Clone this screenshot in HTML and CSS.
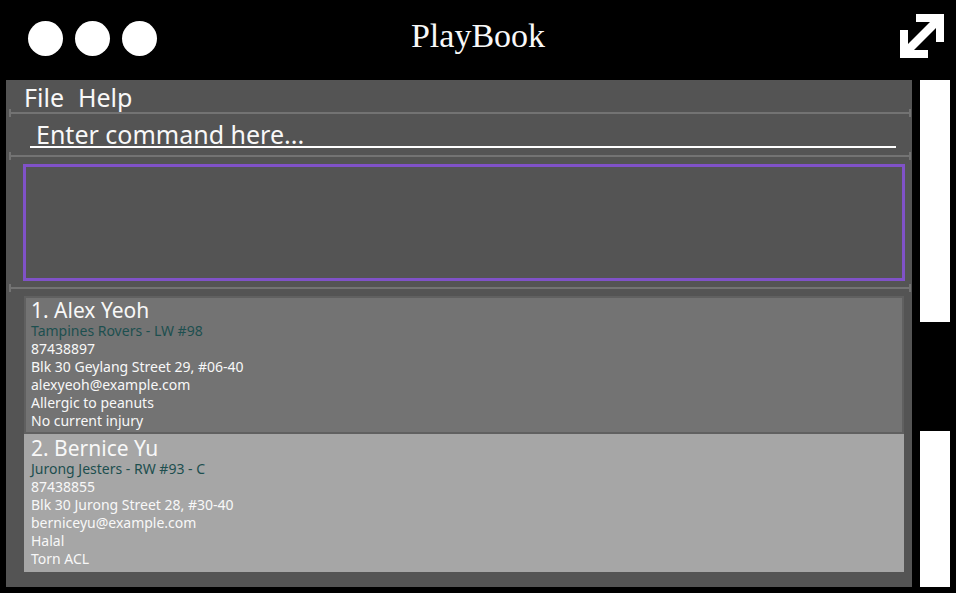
FILE: index.html
```html
<!DOCTYPE html>
<html lang="en">
<head>
<meta charset="utf-8">
<title>PlayBook</title>
<link rel="stylesheet" href="styles.css">
</head>
<body>
<header class="titlebar">
  <div class="dots"><span class="dot"></span><span class="dot"></span><span class="dot"></span></div>
  <h1 class="title">PlayBook</h1>
  <button class="expand" type="button" aria-label="Expand window">
    <svg viewBox="0 0 46 46" width="46" height="46" aria-hidden="true">
      <path fill="#fff" d="M17 1H45V29H37V15L15 37H29V45H1V17H9V31L31 9H17Z"/>
    </svg>
  </button>
</header>
<div class="body">
  <main class="panel">
    <nav class="menu">
      <button type="button">File</button>
      <button type="button">Help</button>
    </nav>
    <div class="divider"></div>
    <form class="command">
      <input type="text" aria-label="Command" placeholder="Enter command here...">
    </form>
    <div class="divider"></div>
    <output class="result" aria-label="Result"></output>
    <div class="divider"></div>
    <section class="people" aria-label="Players">
      <article class="card">
        <h2>1. Alex Yeoh</h2>
        <p class="team">Tampines Rovers - LW #98</p>
        <p>87438897</p>
        <p>Blk 30 Geylang Street 29, #06-40</p>
        <p>alexyeoh@example.com</p>
        <p>Allergic to peanuts</p>
        <p>No current injury</p>
      </article>
      <article class="card light">
        <h2>2. Bernice Yu</h2>
        <p class="team">Jurong Jesters - RW #93 - C</p>
        <p>87438855</p>
        <p>Blk 30 Jurong Street 28, #30-40</p>
        <p>berniceyu@example.com</p>
        <p>Halal</p>
        <p>Torn ACL</p>
      </article>
    </section>
  </main>
  <div class="scrollbar">
    <div class="track upper"></div>
    <div class="thumb"></div>
    <div class="track lower"></div>
  </div>
</div>
</body>
</html>
```
FILE: styles.css
```css
* {
  box-sizing: border-box;
}

body {
  display: flex;
  flex-direction: column;
  min-height: 100vh;
  margin: 0;
  background: #000;
  color: #f8f8f8;
  font-family: "Noto Sans", "Open Sans", sans-serif;
}

h1, h2, p {
  margin: 0;
  font-weight: 400;
}

button {
  padding: 0;
  border: 0;
  background: none;
  color: inherit;
  font: inherit;
}

.titlebar {
  display: grid;
  grid-template-columns: 1fr auto 1fr;
  align-items: center;
  height: 80px;
  padding: 0 11px 8px;
}

.dots {
  display: flex;
  gap: 12px;
  padding: 5px 0 0 17px;
}

.dot {
  width: 35px;
  height: 35px;
  border-radius: 50%;
  background: #fff;
}

.title {
  font-family: "Liberation Serif", serif;
  font-size: 34px;
  line-height: 40px;
}

.expand {
  justify-self: end;
  height: 46px;
}

.expand svg {
  display: block;
}

.body {
  display: flex;
  flex: 1;
  gap: 8px;
  padding: 0 6px 6px;
}

.panel {
  flex: 1;
  background: #545454;
}

.menu {
  display: flex;
  gap: 14px;
  height: 32px;
  padding-left: 18px;
  font-size: 25px;
  line-height: 34px;
}

.divider {
  position: relative;
  height: 2px;
  margin: 0 1px 0 3px;
  background: #737373;
}

.divider::before,
.divider::after {
  content: "";
  position: absolute;
  top: -3px;
  width: 2px;
  height: 8px;
  background: #737373;
}

.divider::before {
  left: 0;
}

.divider::after {
  right: 0;
}

.command {
  height: 41px;
  padding: 4px 16px 7px 24px;
}

.command input {
  display: block;
  width: 100%;
  height: 30px;
  padding: 4px 0 0 6px;
  border: 0;
  border-bottom: 2px solid #fff;
  outline: 0;
  background: none;
  color: inherit;
  font: 25px "Noto Sans", "Open Sans", sans-serif;
}

.command input::placeholder {
  color: #f8f8f8;
  opacity: 1;
}

.result {
  display: block;
  height: 117px;
  margin: 7px 7px 6px 17px;
  border: 3px solid #8052c8;
}

.people {
  padding: 7px 8px 15px 18px;
}

.card {
  padding: 0 5px 2px;
  border: 2px solid #606060;
  background: #737373;
  font-size: 14px;
  line-height: 18px;
}

.card.light {
  border-color: #a6a6a6;
  background: #a6a6a6;
}

.card h2 {
  font-size: 21px;
  line-height: 24px;
}

.team {
  color: #1d4f4f;
}

.scrollbar {
  display: flex;
  flex-direction: column;
  width: 30px;
}

.track {
  background: #fff;
}

.upper {
  flex: 242;
}

.thumb {
  flex: 109;
}

.lower {
  flex: 156;
}
```
